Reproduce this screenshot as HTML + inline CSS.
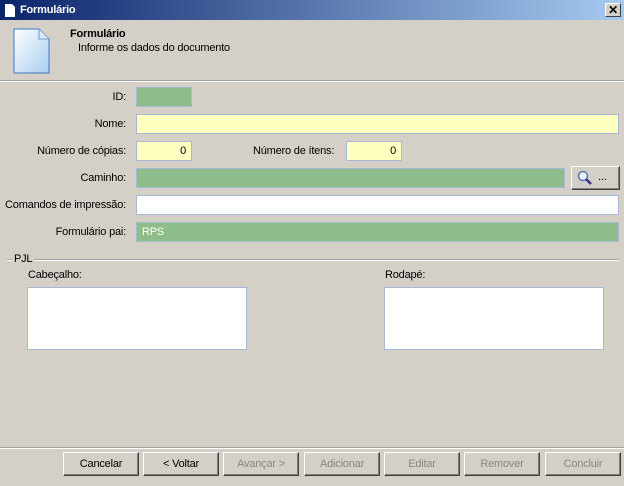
<!DOCTYPE html>
<html><head><meta charset="utf-8"><style>
*{margin:0;padding:0;box-sizing:border-box}
body{width:624px;height:486px;background:#d4d0c8;font-family:"Liberation Sans",sans-serif;font-size:11px;letter-spacing:-0.2px;color:#000;position:relative;overflow:hidden}
.a{position:absolute}
.tb{left:0;top:0;width:624px;height:20px;background:linear-gradient(90deg,#0a246a,#a6caf0);color:#fff;font-weight:bold;font-size:11px;line-height:20px;padding-left:20px}
.f{position:absolute;border:1px solid #a5b9d5;height:20px;line-height:18px;padding:0 5px}
.g{background:#8fbc8b;color:#fff}
.y{background:#ffffc0;text-align:right}
.w{background:#fff}
.l{position:absolute;text-align:right;width:126px;left:0;line-height:20px}
.b{position:absolute;top:452px;width:76px;height:24px;border:1px solid;border-color:#fff #404040 #404040 #fff;box-shadow:inset -1px -1px #808080;text-align:center;line-height:22px}
.d{color:#8a877f}
</style></head><body>
<div class="a tb">Formulário</div>
<svg class="a" style="left:4px;top:4px" width="12" height="13"><path d="M1 0H8L11 3V13H1Z" fill="#fff"/></svg>
<div class="a" style="left:605px;top:3px;width:16px;height:14px;background:#d4d0c8;border:1px solid;border-color:#fff #404040 #404040 #fff;text-align:center;font-weight:bold;font-size:12px;line-height:12px">✕</div>
<svg class="a" style="left:13px;top:28px" width="37" height="46"><defs><linearGradient id="p" x1="0" y1="0" x2="1" y2="1"><stop offset="0" stop-color="#fff"/><stop offset="1" stop-color="#a8cdf0"/></linearGradient></defs><path d="M1 1H26L36 11V45H1Z" fill="url(#p)" stroke="#3a78c0"/><path d="M26 1V11H36" fill="#d8e8f8" stroke="#6a98cc"/></svg>
<div class="a" style="left:70px;top:28px;font-weight:bold">Formulário</div>
<div class="a" style="left:78px;top:42px">Informe os dados do documento</div>
<div class="a" style="left:0;top:80px;width:624px;height:2px;border-top:1px solid #a0a0a0;border-bottom:1px solid #fff"></div>

<div class="l" style="top:87px">ID:</div><div class="f g" style="left:136px;top:87px;width:56px"></div>
<div class="l" style="top:114px">Nome:</div><div class="f y" style="left:136px;top:114px;width:483px"></div>
<div class="l" style="top:141px">Número de cópias:</div><div class="f y" style="left:136px;top:141px;width:56px">0</div>
<div class="a" style="left:253px;top:141px;line-height:20px">Número de ítens:</div><div class="f y" style="left:346px;top:141px;width:56px">0</div>
<div class="l" style="top:168px">Caminho:</div><div class="f g" style="left:136px;top:168px;width:429px"></div>
<div class="a" style="left:571px;top:166px;width:49px;height:24px;border:1px solid;border-color:#fff #404040 #404040 #fff;box-shadow:inset -1px -1px #808080;line-height:20px;padding-left:26px">...</div>
<svg class="a" style="left:576px;top:170px" width="18" height="16"><circle cx="7" cy="6" r="4.5" fill="#e8f4ff" stroke="#5a7aa8" stroke-width="1.5"/><path d="M10 9L15 14" stroke="#40308a" stroke-width="2.5"/></svg>
<div class="l" style="top:195px">Comandos de impressão:</div><div class="f w" style="left:136px;top:195px;width:483px"></div>
<div class="l" style="top:222px">Formulário pai:</div><div class="f g" style="left:136px;top:222px;width:483px">RPS</div>

<div class="a" style="left:7px;top:259px;width:612px;height:2px;border-top:1px solid #a0a0a0;border-bottom:1px solid #fff"></div>
<div class="a" style="left:12px;top:252px;background:#d4d0c8;padding:0 2px;line-height:14px">PJL</div>
<div class="a" style="left:28px;top:269px">Cabeçalho:</div>
<div class="f w" style="left:27px;top:287px;width:220px;height:63px"></div>
<div class="a" style="left:385px;top:269px">Rodapé:</div>
<div class="f w" style="left:384px;top:287px;width:220px;height:63px"></div>

<div class="a" style="left:0;top:447px;width:624px;height:2px;border-top:1px solid #a0a0a0;border-bottom:1px solid #fff"></div>
<div class="b" style="left:63px">Cancelar</div>
<div class="b" style="left:143px">&lt; Voltar</div>
<div class="b d" style="left:223px">Avançar &gt;</div>
<div class="b d" style="left:304px">Adicionar</div>
<div class="b d" style="left:384px">Editar</div>
<div class="b d" style="left:464px">Remover</div>
<div class="b d" style="left:545px">Concluir</div>
</body></html>
